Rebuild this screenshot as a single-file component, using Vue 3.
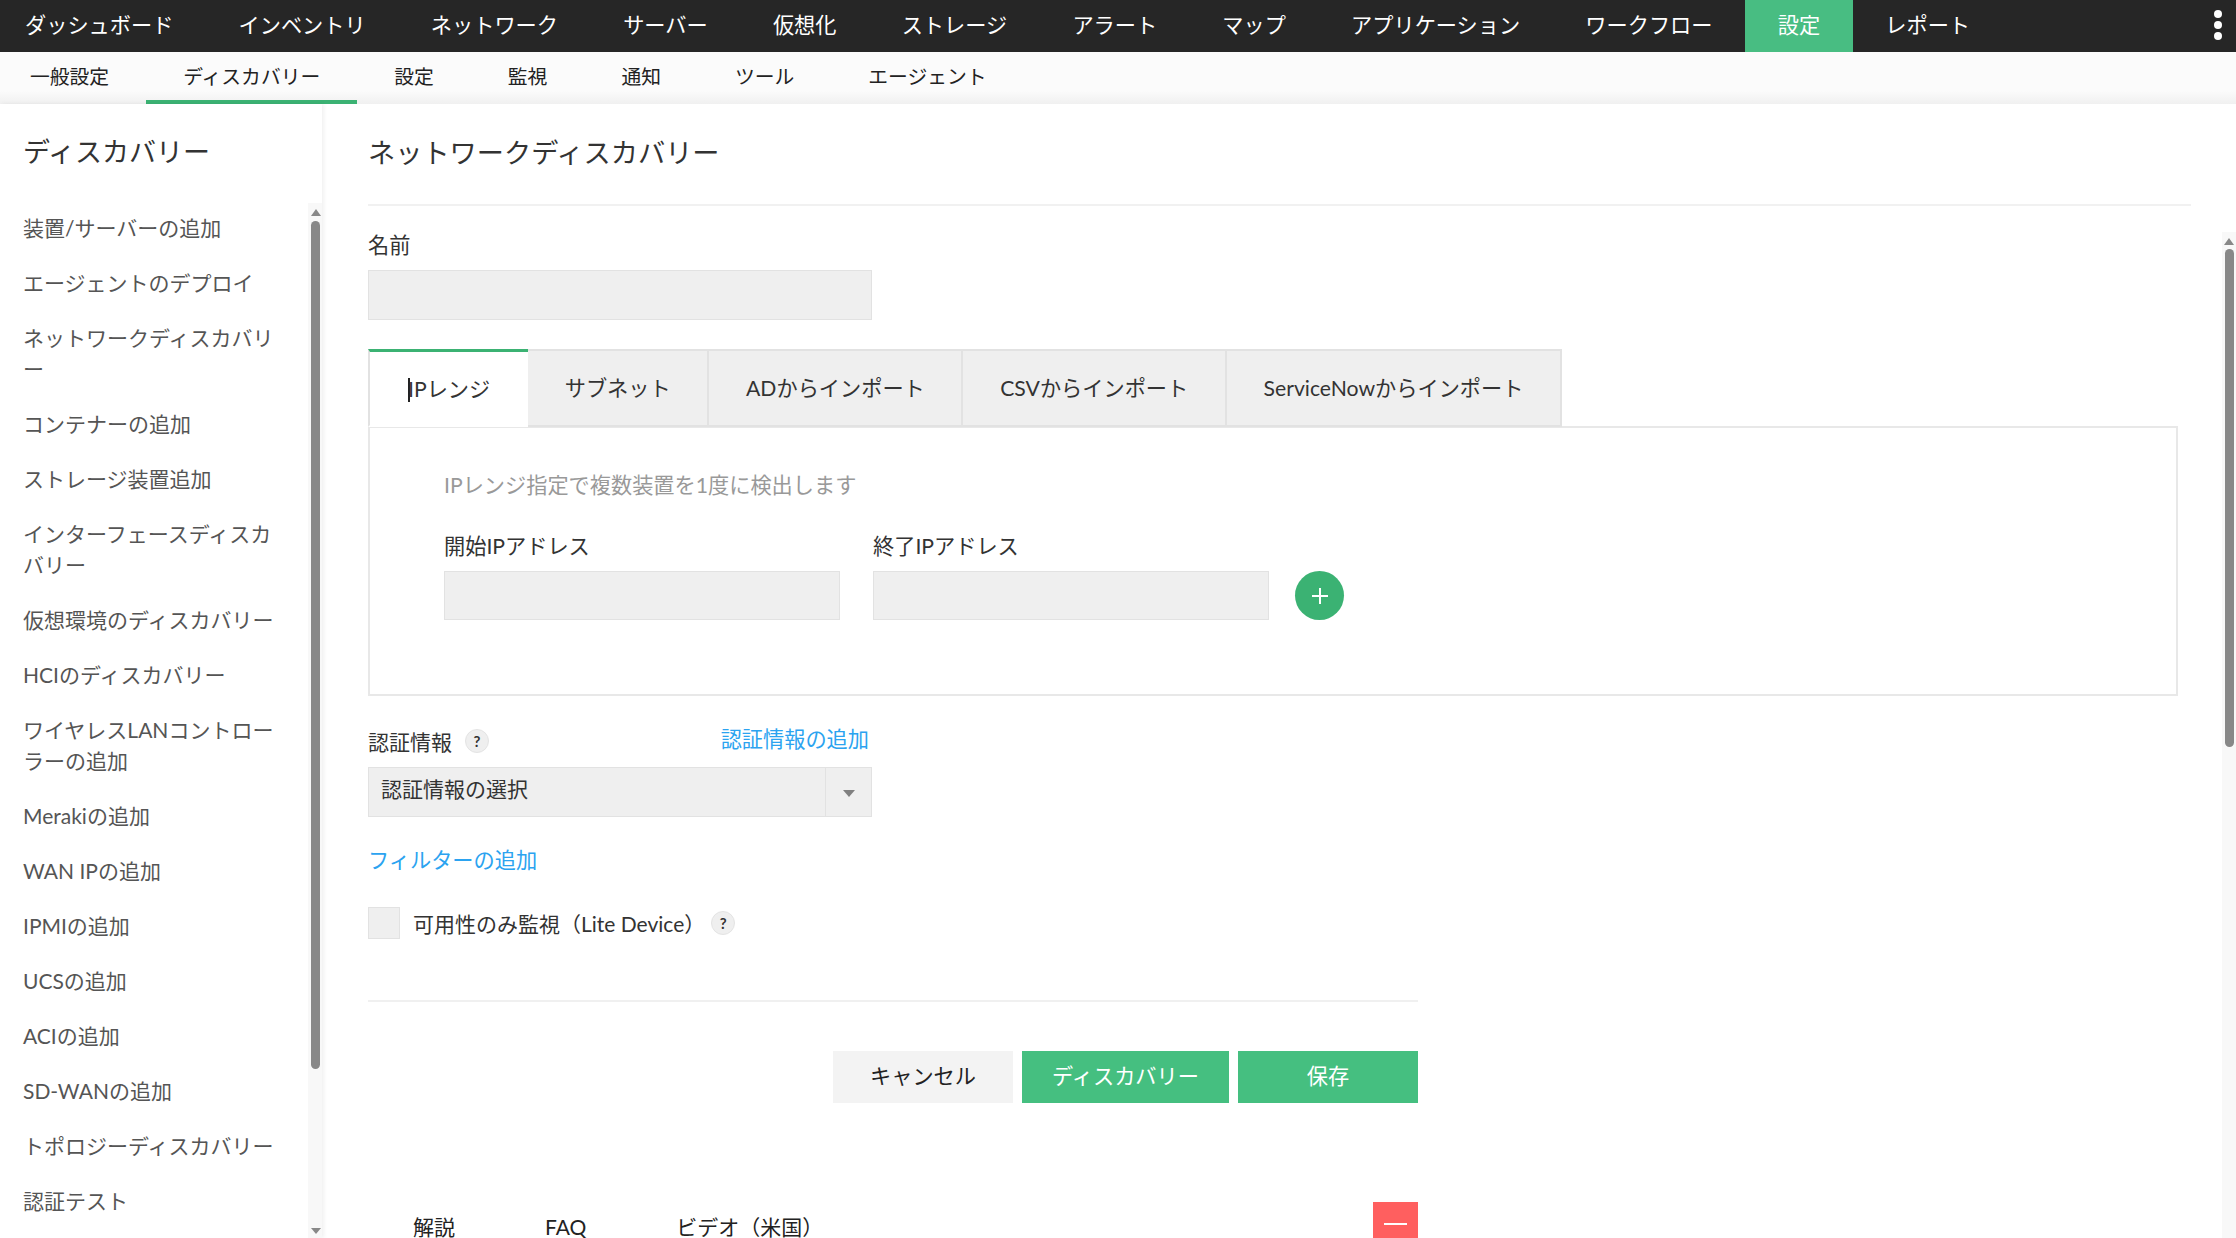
<template>
  <div class="app" lang="ja">
    <div class="topnav">
      <div v-for="item in topItems" class="top-item" :class="{active: item=='設定'}">{{item}}</div>
      <div class="kebab"><i></i><i></i><i></i></div>
    </div>
    <div class="subnav">
      <div v-for="item in subItems" class="sub-item" :class="{active: item=='ディスカバリー'}">{{item}}</div>
    </div>
    <div class="content">
      <div class="side">
        <div class="side-title">ディスカバリー</div>
        <div class="side-list">
          <div v-for="item in sideItems" class="side-item">{{item}}</div>
        </div>
        <div class="scroll side-scroll"><div class="arrow-up"></div><div class="thumb"></div><div class="arrow-down"></div></div>
      </div>
      <div class="main">
        <div class="page-title">ネットワークディスカバリー</div>
        <div class="label name-label">名前</div>
        <div class="field name-field"></div>

        <div class="tabs">
          <div v-for="(tab, i) in tabs" class="tab" :class="{active: i==0}"><span v-if="i==0" class="caret"></span>{{tab}}</div>
        </div>
        <div class="panel">
          <div class="hint">IPレンジ指定で複数装置を1度に検出します</div>
          <div class="ip-row">
            <div class="ip-col">
              <div class="label">開始IPアドレス</div>
              <div class="field ip-field"></div>
            </div>
            <div class="ip-col">
              <div class="label">終了IPアドレス</div>
              <div class="field ip-field"></div>
            </div>
            <div class="plus">
              <svg width="18" height="18" viewBox="0 0 18 18"><path d="M9 1v16M1 9h16" stroke="#fff" stroke-width="2" fill="none"/></svg>
            </div>
          </div>
        </div>

        <div class="cred-row">
          <div class="cred-label">認証情報<span class="help">?</span></div>
          <a class="link cred-link">認証情報の追加</a>
        </div>
        <div class="select">
          <div class="select-text">認証情報の選択</div>
          <div class="select-btn"><span class="select-arrow"></span></div>
        </div>
        <a class="link filter-link">フィルターの追加</a>
        <div class="check-row">
          <div class="checkbox"></div>
          <span>可用性のみ監視（Lite Device）</span><span class="help">?</span>
        </div>
        <div class="rule"></div>
        <div class="buttons">
          <div class="btn cancel">キャンセル</div>
          <div class="btn discover">ディスカバリー</div>
          <div class="btn save">保存</div>
        </div>
        <div class="help-tabs">
          <span>解説</span><span>FAQ</span><span>ビデオ（米国）</span>
          <div class="collapse"><i></i></div>
        </div>
        <div class="scroll main-scroll"><div class="arrow-up"></div><div class="thumb"></div></div>
      </div>
    </div>
  </div>
</template>
<script setup>
  const topItems = ['ダッシュボード','インベントリ','ネットワーク','サーバー','仮想化','ストレージ','アラート','マップ','アプリケーション','ワークフロー','設定','レポート']
  const subItems = ['一般設定','ディスカバリー','設定','監視','通知','ツール','エージェント']
  const sideItems = ['装置/サーバーの追加','エージェントのデプロイ','ネットワークディスカバリー','コンテナーの追加','ストレージ装置追加','インターフェースディスカバリー','仮想環境のディスカバリー','HCIのディスカバリー','ワイヤレスLANコントローラーの追加','Merakiの追加','WAN IPの追加','IPMIの追加','UCSの追加','ACIの追加','SD-WANの追加','トポロジーディスカバリー','認証テスト']
  const tabs = ['IPレンジ','サブネット','ADからインポート','CSVからインポート','ServiceNowからインポート']
</script>
<style>
html, body { margin:0; overflow:hidden; background:#fff; }
</style>
<style scoped>
.app {
  width:2236px;
  height:1238px;
  overflow:hidden;
  display:flex;
  flex-direction:column;
  font-family:Lato, "Noto Sans CJK JP", sans-serif;
  font-size:21px;
  color:#333;
}
.topnav {
  height:52px;
  background:#262626;
  display:flex;
  position:relative;
  flex:none;
}
.top-item {
  padding:0 32.6px;
  line-height:50px;
  color:#fff;
  font-size:21.2px;
  white-space:nowrap;
}
.top-item:first-child { padding-left:25px; }
.top-item.active { background:#48bd82; }
.kebab {
  position:absolute;
  right:14px;
  top:10px;
  display:flex;
  flex-direction:column;
  gap:3px;
}
.kebab i {
  width:8px;
  height:8px;
  border-radius:50%;
  background:#fff;
}
.subnav {
  height:52px;
  flex:none;
  display:flex;
  background:linear-gradient(#fbfbfb 75%, #f0f0f0);
}
.sub-item {
  padding:0 37px;
  line-height:48px;
  font-size:19.8px;
  color:#222;
  white-space:nowrap;
  box-sizing:border-box;
}
.sub-item:first-child { padding-left:30px; }
.sub-item.active { border-bottom:4px solid #3bb273; }
.content {
  flex:1;
  display:flex;
  min-height:0;
}
.side {
  width:322px;
  flex:none;
  position:relative;
  overflow:hidden;
  box-shadow:2px 0 4px rgba(0,0,0,.06);
  box-sizing:border-box;
  padding-left:23px;
}
.side-title {
  margin-top:29px;
  font-size:27px;
  line-height:38px;
  color:#333;
}
.side-list {
  margin-top:41px;
  width:262px;
  display:flex;
  flex-direction:column;
  gap:24px;
}
.side-item {
  line-height:31px;
  color:#555;
  line-break:loose;
}
.scroll {
  position:absolute;
  background:#f8f8f8;
}
.scroll .thumb {
  position:absolute;
  background:#888;
  border-radius:5px;
}
.arrow-up, .arrow-down {
  position:absolute;
  width:0;
  height:0;
  border-left:5px solid transparent;
  border-right:5px solid transparent;
}
.arrow-up { border-bottom:7px solid #888; top:6px; }
.arrow-down { border-top:6px solid #888; bottom:4px; }
.side-scroll {
  left:308px;
  top:99px;
  width:14px;
  bottom:0;
}
.side-scroll .thumb {
  left:3px;
  top:18px;
  width:9px;
  height:848px;
}
.side-scroll .arrow-up, .side-scroll .arrow-down { left:2.5px; }
.main {
  flex:1;
  position:relative;
  overflow:hidden;
  padding-left:46px;
  min-width:0;
}
.page-title {
  margin-top:30px;
  width:1823px;
  height:70px;
  font-size:27.2px;
  line-height:38px;
  border-bottom:2px solid #f1f1f1;
  color:#333;
}
.label {
  font-size:21.2px;
  line-height:30px;
  color:#333;
}
.name-label { margin-top:24px; }
.field {
  background:#efefef;
  border:1px solid #e2e2e2;
  box-sizing:border-box;
}
.name-field {
  margin-top:10px;
  width:504px;
  height:50px;
}
.tabs {
  margin-top:29px;
  display:flex;
  height:78px;
  box-sizing:border-box;
  position:relative;
  z-index:1;
}
.tab {
  padding:0 36.7px;
  background:#efefef;
  border:2px solid #e2e2e2;
  border-left:none;
  box-sizing:border-box;
  line-height:74px;
  font-size:21.2px;
  white-space:nowrap;
}
.tab.active {
  background:#fff;
  border-top:3px solid #3bb273;
  border-bottom:2px solid #fff;
  border-left:2px solid #e2e2e2;
  border-right:none;
  width:160px;
  padding:0 0 0 38px;
  line-height:75px;
}
.caret {
  display:inline-block;
  width:2px;
  height:24px;
  background:#222;
  vertical-align:-5px;
  margin-right:-2px;
}
.panel {
  width:1810px;
  height:270px;
  margin-top:-1px;
  border:2px solid #e8e8e8;
  box-sizing:border-box;
  padding:42px 74px 0;
}
.hint {
  color:#999;
  line-height:30px;
  font-size:21.2px;
}
.ip-row {
  margin-top:31px;
  display:flex;
  align-items:flex-end;
  gap:33px;
}
.ip-col .label { margin-bottom:10px; }
.ip-field {
  width:396px;
  height:49px;
}
.plus {
  width:49px;
  height:49px;
  border-radius:50%;
  background:#3bb273;
  margin-left:-7px;
  display:flex;
  align-items:center;
  justify-content:center;
}
.cred-row {
  margin-top:32px;
  width:501px;
  height:26px;
  display:flex;
  justify-content:space-between;
  align-items:center;
}
.cred-label {
  display:flex;
  align-items:center;
  font-size:21px;
}
.help {
  width:24px;
  height:24px;
  border-radius:50%;
  background:#efefef;
  border:1px solid #e4e4e4;
  box-sizing:border-box;
  font-size:15px;
  font-weight:700;
  line-height:22px;
  text-align:center;
  color:#333;
  margin-left:13px;
  flex:none;
}
.link {
  color:#2ba3f0;
  font-size:21.2px;
  line-height:30px;
}
.cred-link { margin-bottom:4px; }
.select {
  margin-top:13px;
  width:504px;
  height:50px;
  background:#efefef;
  border:1px solid #e2e2e2;
  box-sizing:border-box;
  display:flex;
}
.select-text {
  flex:1;
  padding-left:12px;
  line-height:42px;
  font-size:21px;
}
.select-btn {
  width:45px;
  border-left:1px solid #e2e2e2;
  display:flex;
  align-items:center;
  justify-content:center;
}
.select-arrow {
  width:0;
  height:0;
  border-left:6px solid transparent;
  border-right:6px solid transparent;
  border-top:7px solid #808080;
  margin-top:2px;
}
.filter-link {
  display:block;
  margin-top:28px;
}
.check-row {
  margin-top:32px;
  display:flex;
  align-items:center;
  height:32px;
  font-size:21px;
}
.check-row .help { margin-left:6px; }
.checkbox {
  width:32px;
  height:32px;
  background:#efefef;
  border:1px solid #e2e2e2;
  box-sizing:border-box;
  margin-right:13px;
}
.rule {
  margin-top:61px;
  width:1050px;
  height:2px;
  background:#f0f0f0;
}
.buttons {
  margin-top:49px;
  width:1050px;
  display:flex;
  justify-content:flex-end;
  gap:9px;
}
.btn {
  height:52px;
  line-height:50px;
  text-align:center;
  font-size:21.2px;
  width:180px;
}
.cancel { background:#f3f3f3; color:#222; }
.discover { background:#45bf80; color:#fff; width:207px; }
.save { background:#45bf80; color:#fff; }
.help-tabs {
  margin-top:99px;
  width:1050px;
  height:36px;
  padding-left:45px;
  box-sizing:border-box;
  display:flex;
  align-items:flex-end;
  gap:90px;
  color:#222;
  font-size:21px;
  line-height:22px;
}
.collapse {
  margin-left:auto;
  width:45px;
  height:36px;
  background:#ff5f5f;
  flex:none;
  display:flex;
  justify-content:center;
}
.collapse i {
  width:23px;
  height:2px;
  background:#fff;
  margin-top:21px;
}
.main-scroll {
  right:0;
  top:128px;
  width:14px;
  bottom:0;
}
.main-scroll .thumb {
  left:3px;
  top:17px;
  width:9px;
  height:498px;
}
.main-scroll .arrow-up { left:2px; }
</style>
